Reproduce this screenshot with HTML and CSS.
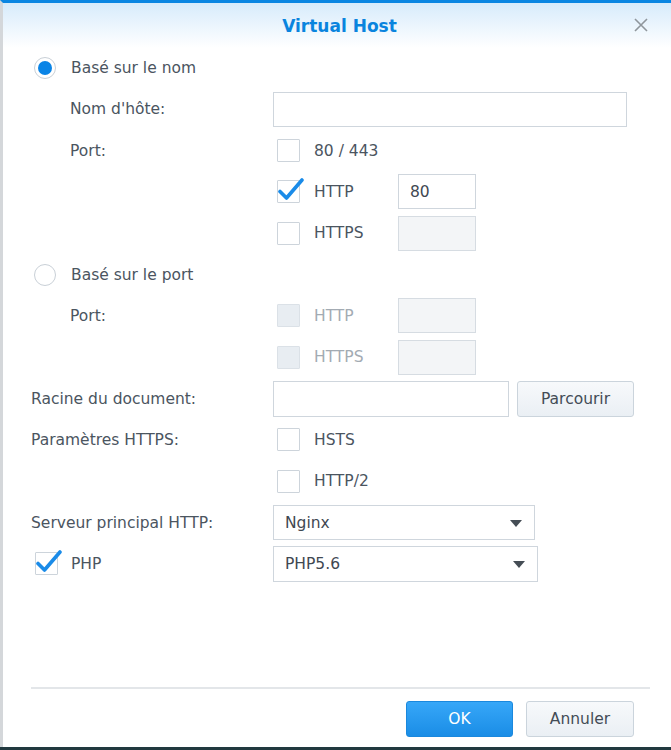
FILE: index.html
```html
<!DOCTYPE html>
<html lang="fr">
<head>
<meta charset="utf-8">
<title>Virtual Host</title>
<link rel="stylesheet" href="styles.css">
</head>
<body>
<div class="window">
  <header class="titlebar">
    <h1 class="title">Virtual Host</h1>
    <span class="close" aria-label="Fermer">
      <svg width="16" height="16" viewBox="0 0 16 16"><path d="M2 2 L14 14 M14 2 L2 14" stroke="#8f969c" stroke-width="1.6" fill="none"/></svg>
    </span>
  </header>

  <div class="form">
    <div class="row">
      <div class="lbl"><span class="radio on"></span><span>Basé sur le nom</span></div>
    </div>
    <div class="row">
      <div class="lbl sub">Nom d'hôte:</div>
      <span class="input w-host"></span>
    </div>
    <div class="row">
      <div class="lbl sub">Port:</div>
      <div class="opt"><span class="box"></span><span>80 / 443</span></div>
    </div>
    <div class="row">
      <div class="lbl"></div>
      <div class="opt"><span class="box checked"><svg class="tick" width="28" height="28" viewBox="0 0 28 28"><path d="M4 15.5 L10.5 22 L26 4" stroke="#1a8be8" stroke-width="3.6" fill="none" stroke-linecap="round" stroke-linejoin="round"/></svg></span><span>HTTP</span></div>
      <span class="input w-port">80</span>
    </div>
    <div class="row">
      <div class="lbl"></div>
      <div class="opt"><span class="box"></span><span>HTTPS</span></div>
      <span class="input w-port dis"></span>
    </div>
    <div class="row">
      <div class="lbl"><span class="radio"></span><span>Basé sur le port</span></div>
    </div>
    <div class="row">
      <div class="lbl sub">Port:</div>
      <div class="opt disabled"><span class="box"></span><span>HTTP</span></div>
      <span class="input w-port dis"></span>
    </div>
    <div class="row">
      <div class="lbl"></div>
      <div class="opt disabled"><span class="box"></span><span>HTTPS</span></div>
      <span class="input w-port dis"></span>
    </div>
    <div class="row">
      <div class="lbl">Racine du document:</div>
      <span class="input w-root"></span>
      <span class="btn browse">Parcourir</span>
    </div>
    <div class="row">
      <div class="lbl">Paramètres HTTPS:</div>
      <div class="opt"><span class="box"></span><span>HSTS</span></div>
    </div>
    <div class="row">
      <div class="lbl"></div>
      <div class="opt"><span class="box"></span><span>HTTP/2</span></div>
    </div>
    <div class="row">
      <div class="lbl">Serveur principal HTTP:</div>
      <span class="input select w-nginx">Nginx<span class="caret"></span></span>
    </div>
    <div class="row">
      <div class="lbl"><span class="box php checked"><svg class="tick" width="28" height="28" viewBox="0 0 28 28"><path d="M4 15.5 L10.5 22 L26 4" stroke="#1a8be8" stroke-width="3.6" fill="none" stroke-linecap="round" stroke-linejoin="round"/></svg></span><span>PHP</span></div>
      <span class="input select w-php">PHP5.6<span class="caret"></span></span>
    </div>
  </div>

  <footer class="footer">
    <div class="sep"></div>
    <div class="actions">
      <span class="btn primary">OK</span>
      <span class="btn">Annuler</span>
    </div>
  </footer>
</div>
</body>
</html>
```

FILE: styles.css
```css
html, body {
  margin: 0;
  padding: 0;
}
body {
  width: 671px;
  height: 750px;
  background: #21393f;
  font-family: "DejaVu Sans", "Liberation Sans", sans-serif;
  font-size: 15.5px;
  color: #4b555f;
  overflow: hidden;
}
.window {
  box-sizing: border-box;
  width: 671px;
  height: 747px;
  background: #ffffff;
  border-top: 3px solid #0b86e2;
  border-left: 3px solid #d4d7da;
  display: flex;
  flex-direction: column;
}
.titlebar {
  height: 45px;
  flex: none;
  display: flex;
  align-items: center;
  justify-content: center;
  position: relative;
  background: linear-gradient(#d7ebfb, #ffffff);
}
.title {
  margin: 0;
  font-size: 17px;
  font-weight: bold;
  color: #0a84de;
  margin-left: 5px;
}
.close {
  position: absolute;
  right: 22px;
  top: 14px;
  width: 16px;
  height: 16px;
  display: block;
}
.close svg { display: block; }

.form {
  padding: 2px 0 0 28px;
  display: flex;
  flex-direction: column;
  gap: 5.33px;
}
.row {
  height: 36px;
  display: flex;
  align-items: center;
}
.lbl {
  width: 242px;
  flex: none;
  box-sizing: border-box;
  display: flex;
  align-items: center;
}
.lbl.sub { padding-left: 39px; }

.radio {
  box-sizing: border-box;
  width: 22px;
  height: 22px;
  border-radius: 50%;
  border: 1px solid #c9d0d7;
  background: #fff;
  margin-left: 3px;
  margin-right: 15px;
  flex: none;
  position: relative;
}
.radio.on::after {
  content: "";
  position: absolute;
  left: 3px;
  top: 3px;
  width: 14px;
  height: 14px;
  border-radius: 50%;
  background: #0a84e6;
}

.opt {
  width: 125px;
  flex: none;
  display: flex;
  align-items: center;
}
.box {
  box-sizing: border-box;
  width: 23px;
  height: 23px;
  border: 1px solid #cdd4db;
  border-radius: 1px;
  background: #fff;
  margin-left: 4px;
  margin-right: 14px;
  flex: none;
  position: relative;
}
.box.php { margin-right: 13px; }
.tick {
  position: absolute;
  left: -2px;
  top: -5px;
}
.opt.disabled { color: #a3abb3; }
.opt.disabled .box {
  background: #e8edf2;
  border-color: #dbe1e7;
}

.input {
  box-sizing: border-box;
  height: 36px;
  border: 1px solid #cfd6dd;
  background: #fff;
  display: flex;
  align-items: center;
  padding-left: 11px;
  flex: none;
  color: #3f4852;
}
.input.dis {
  background: #f3f5f7;
  border-color: #d6dce2;
}
.w-host { width: 354px; height: 35px; }
.w-port { width: 78px; height: 35px; }
.w-root { width: 236px; }
.w-nginx { width: 262px; height: 35px; }
.w-php { width: 265px; }
.select { position: relative; }
.caret {
  position: absolute;
  right: 12px;
  top: 50%;
  margin-top: -3px;
  width: 0;
  height: 0;
  border-left: 6px solid transparent;
  border-right: 6px solid transparent;
  border-top: 7px solid #454d55;
}

.btn {
  box-sizing: border-box;
  height: 36px;
  display: inline-flex;
  align-items: center;
  justify-content: center;
  border: 1px solid #cbd4dc;
  border-radius: 3px;
  background: linear-gradient(#f7f9fb, #eaeff4);
  color: #434c56;
  font-size: 15.5px;
  flex: none;
}
.browse {
  width: 117px;
  margin-left: 8px;
}

.footer {
  margin-top: auto;
  padding: 0 0 10px 28px;
}
.sep {
  height: 2px;
  background: #e3e6e9;
  width: 619px;
}
.actions {
  margin-top: 12px;
  display: flex;
  justify-content: flex-end;
  gap: 13px;
  padding-right: 37px;
}
.actions .btn {
  width: 108px;
}
.btn.primary {
  width: 107px;
  background: linear-gradient(#37a7f8, #1a8de6);
  border-color: #1a88dd;
  color: #ffffff;
}
```
